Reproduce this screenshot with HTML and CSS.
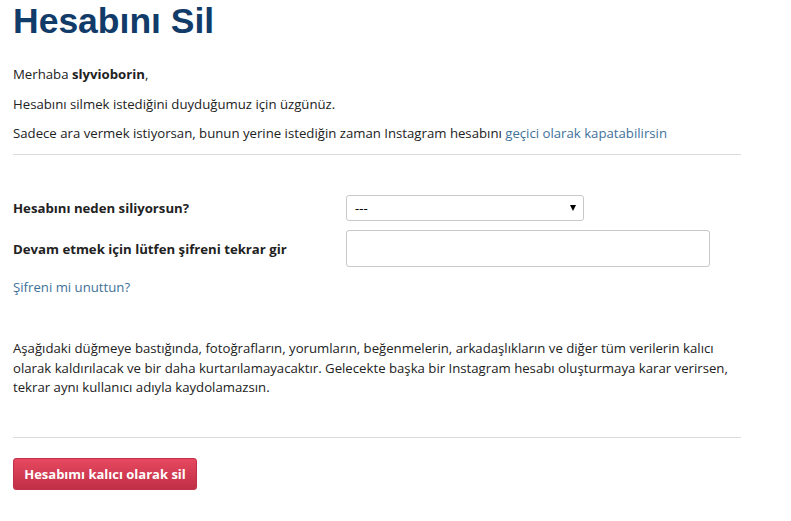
FILE: index.html
```html
<!DOCTYPE html>
<html lang="tr">
<head>
<meta charset="utf-8">
<link rel="stylesheet" href="styles.css">
</head>
<body>
<div class="page">
  <h1 class="title">Hesabını Sil</h1>
  <p class="p p-first">Merhaba <strong>slyvioborin</strong>,</p>
  <p class="p">Hesabını silmek istediğini duyduğumuz için üzgünüz.</p>
  <p class="p">Sadece ara vermek istiyorsan, bunun yerine istediğin zaman Instagram hesabını <a class="link" href="#">geçici olarak kapatabilirsin</a></p>
  <hr class="rule rule-top">
  <form class="form">
    <div class="row row-select">
      <label class="label">Hesabını neden siliyorsun?</label>
      <div class="select">
        <span class="select-value">---</span>
        <span class="select-arrow"></span>
      </div>
    </div>
    <div class="row row-input">
      <label class="label">Devam etmek için lütfen şifreni tekrar gir</label>
      <div class="input"></div>
    </div>
    <a class="link forgot" href="#">Şifreni mi unuttun?</a>
  </form>
  <p class="warning">Aşağıdaki düğmeye bastığında, fotoğrafların, yorumların, beğenmelerin, arkadaşlıkların ve diğer tüm verilerin kalıcı olarak kaldırılacak ve bir daha kurtarılamayacaktır. Gelecekte başka bir Instagram hesabı oluşturmaya karar verirsen, tekrar aynı kullanıcı adıyla kaydolamazsın.</p>
  <hr class="rule rule-bottom">
  <button class="btn" type="button">Hesabımı kalıcı olarak sil</button>
</div>
</body>
</html>
```
FILE: styles.css
```css
html, body {
  margin: 0;
  padding: 0;
  background: #fff;
}
body {
  font-family: "Open Sans", "Noto Sans", sans-serif;
  font-size: 13.2px;
  color: #222;
}
.page {
  width: 728px;
  padding: 0 0 0 13px;
}
.title {
  font-family: "Liberation Sans", Arial, sans-serif;
  font-weight: bold;
  font-size: 35.5px;
  color: #113b69;
  margin: 0;
  padding-top: 2px;
  line-height: 38px;
}
.p {
  margin: 0;
  line-height: 19px;
  margin-top: 10.5px;
}
.p-first {
  margin-top: 25px;
}
.link {
  color: #3f729b;
  text-decoration: none;
}
.rule {
  border: 0;
  border-top: 1px solid #dbdbdb;
  margin: 0;
}
.rule-top {
  margin-top: 11px;
}
.form {
  padding-top: 40px;
}
.row {
  display: flex;
  align-items: center;
}
.label {
  width: 333px;
  font-weight: bold;
  color: #222;
}
.select {
  border: 1px solid #c8c8c8;
  border-radius: 3px;
  display: flex;
  align-items: center;
  justify-content: space-between;
  padding: 0 7px 0 8px;
  box-sizing: border-box;
  width: 238px;
  height: 26px;
}
.select-value {
  color: #000;
}
.select-arrow {
  width: 0;
  height: 0;
  border-left: 3.5px solid transparent;
  border-right: 3.5px solid transparent;
  border-top: 6px solid #000;
}
.row-input {
  margin-top: 9px;
}
.input {
  width: 364px;
  height: 37px;
  box-sizing: border-box;
  border: 1px solid #c8c8c8;
  border-radius: 3px;
}
.forgot {
  display: block;
  margin-top: 11px;
  line-height: 19px;
}
.warning {
  margin: 42px 0 0;
  line-height: 19.5px;
  width: 728px;
}
.rule-bottom {
  margin-top: 39px;
}
.btn {
  margin-top: 20px;
  height: 32px;
  width: 184px;
  border: 1px solid #c0304a;
  border-radius: 3px;
  background: linear-gradient(#e6485f, #c02f46);
  color: #fff;
  font-family: "Open Sans", "Noto Sans", sans-serif;
  font-weight: bold;
  font-size: 13px;
  padding: 0;
  box-shadow: 0 1px 1px rgba(0,0,0,0.15);
}
```
